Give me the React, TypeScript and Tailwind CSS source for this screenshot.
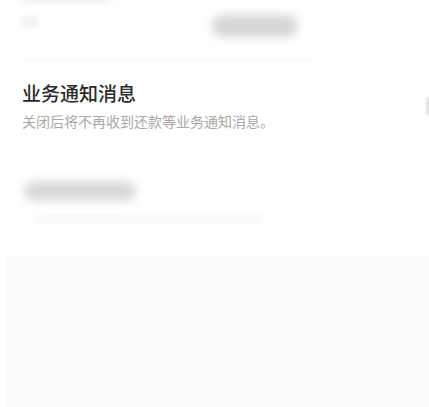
export default function App() {
  return (
    <div
      className="flex flex-col w-[429px] h-[407px] overflow-hidden bg-white"
      style={{ fontFamily: '"Noto Sans CJK SC", "Noto Sans", sans-serif' }}
    >
      {/* blurred first row */}
      <div className="flex flex-col h-[61px] px-[22px]">
        <div className="flex justify-between items-start">
          <div className="flex flex-col gap-[14px] -mt-[4px]">
            <div className="w-[90px] h-[6px] rounded-full bg-[#ececec] blur-[3px]" />
            <div className="w-[16px] h-[12px] bg-[#f3f3f3] blur-[2px]" />
          </div>
          <div className="mt-[15px] mr-[109px] w-[86px] h-[22px] rounded-full bg-[#d6d6d6] blur-[5px]" />
        </div>
        <div className="mt-auto w-[290px] h-[2px] bg-[#f9f9f9] blur-[1px]" />
      </div>

      {/* business notification row */}
      <div className="flex items-start justify-between pt-[19px] pl-[22px]">
        <div className="flex flex-col">
          <div className="text-[19px] leading-[26px] font-medium text-[#2a2a2a]">业务通知消息</div>
          <div className="mt-[5px] text-[14px] leading-[20px] text-[#a8a8a8]">关闭后将不再收到还款等业务通知消息。</div>
        </div>
        <div className="mt-[16px] -mr-[7px] w-[10px] h-[20px] rounded-full bg-[#e2e2e2] blur-[1px]" />
      </div>

      {/* blurred next row */}
      <div className="flex flex-col gap-[15px] pt-[50px] pl-[24px]">
        <div className="w-[112px] h-[20px] rounded-full bg-[#d9d9d9] blur-[5px]" />
        <div className="ml-[8px] w-[230px] h-[6px] rounded-full bg-[#f6f6f6] blur-[3px]" />
      </div>

      {/* bottom panel */}
      <div className="flex-1 mt-[34px] ml-[5px] bg-[#fafbfb]" />
    </div>
  );
}
